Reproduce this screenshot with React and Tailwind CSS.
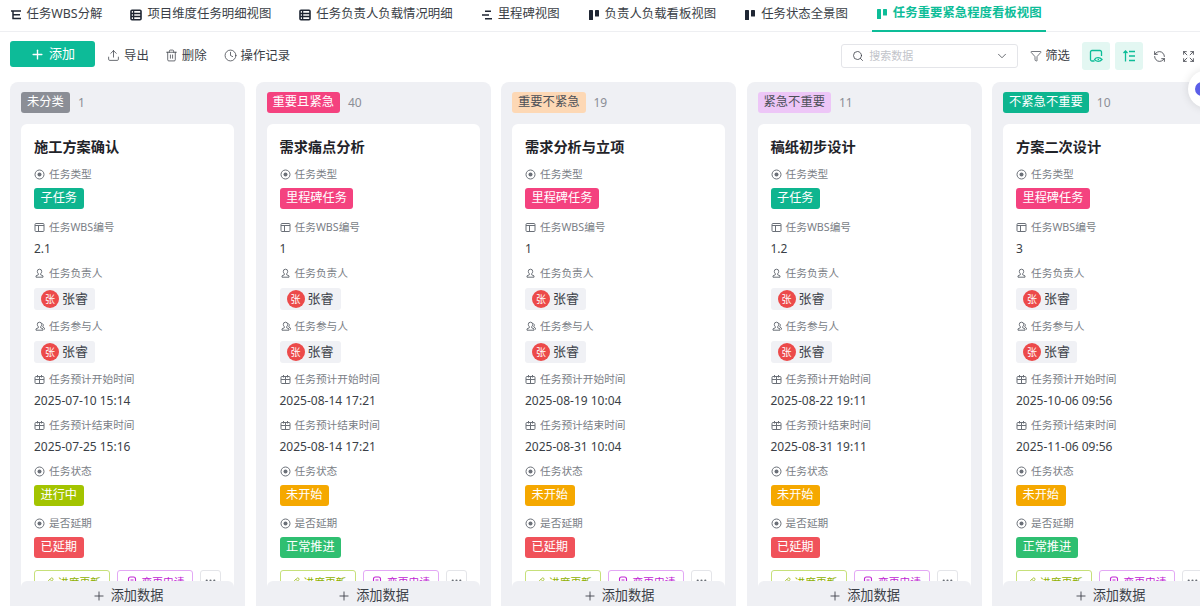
import { Plus, Upload, Trash2, Clock, Search, ChevronDown, Funnel, RefreshCcw, Expand, Pencil, Ellipsis } from 'lucide-react';

const tabs = [
  { name: '任务WBS分解', icon: 'tree' },
  { name: '项目维度任务明细视图', icon: 'table' },
  { name: '任务负责人负载情况明细', icon: 'table' },
  { name: '里程碑视图', icon: 'gantt' },
  { name: '负责人负载看板视图', icon: 'kanban' },
  { name: '任务状态全景图', icon: 'kanban' },
  { name: '任务重要紧急程度看板视图', icon: 'kanban', active: true },
];

const columns = [
  {
    name: '未分类', count: 1, tag: 'bg-[#8b8e96] text-white', title: '施工方案确认',
    type: '子任务', wbs: '2.1', start: '2025-07-10 15:14', end: '2025-07-25 15:16', status: '进行中', delay: '已延期',
  },
  {
    name: '重要且紧急', count: 40, tag: 'bg-[#f4427f] text-white', title: '需求痛点分析',
    type: '里程碑任务', wbs: '1', start: '2025-08-14 17:21', end: '2025-08-14 17:21', status: '未开始', delay: '正常推进',
  },
  {
    name: '重要不紧急', count: 19, tag: 'bg-[#fdd8b5] text-[#4b4f57]', title: '需求分析与立项',
    type: '里程碑任务', wbs: '1', start: '2025-08-19 10:04', end: '2025-08-31 10:04', status: '未开始', delay: '已延期',
  },
  {
    name: '紧急不重要', count: 11, tag: 'bg-[#edc6f7] text-[#4b4f57]', title: '稿纸初步设计',
    type: '子任务', wbs: '1.2', start: '2025-08-22 19:11', end: '2025-08-31 19:11', status: '未开始', delay: '已延期',
  },
  {
    name: '不紧急不重要', count: 10, tag: 'bg-[#0eb58f] text-white', title: '方案二次设计',
    type: '里程碑任务', wbs: '3', start: '2025-10-06 09:56', end: '2025-11-06 09:56', status: '未开始', delay: '正常推进',
  },
];

const tagColors = {
  子任务: 'bg-[#0eb58f]',
  里程碑任务: 'bg-[#f4427f]',
  进行中: 'bg-[#a3c400]',
  未开始: 'bg-[#f5a800]',
  已延期: 'bg-[#f0525a]',
  正常推进: 'bg-[#2fbf71]',
};

function TabIcon({ type, active }) {
  const color = active ? '#0dbd98' : '#1f2633';
  if (type === 'table') {
    return (
      <svg width="12" height="12" viewBox="0 0 12 12" fill="none" stroke={color}>
        <rect x="1" y="1.2" width="10" height="9.6" rx="1" strokeWidth="1.6" />
        <path d="M1 4.5h10M1 7.5h10M3.6 2v8" strokeWidth="1.3" />
      </svg>
    );
  }
  if (type === 'gantt') {
    return (
      <svg width="12" height="12" viewBox="0 0 12 12" fill="none" stroke={color} strokeWidth="1.6">
        <path d="M4 2.2h6M1 6h7M4 9.8h7" />
      </svg>
    );
  }
  if (type === 'tree') {
    return (
      <svg width="12" height="12" viewBox="0 0 12 12" fill="none" stroke={color} strokeWidth="1.5">
        <path d="M1 2h10M3 2v7.5h8M3 5.8h7" />
      </svg>
    );
  }
  return (
    <svg width="12" height="12" viewBox="0 0 12 12" fill={color}>
      <rect x="1" y="1" width="4" height="10" rx="0.6" />
      <rect x="7" y="1" width="4" height="6.5" rx="0.6" />
    </svg>
  );
}

function DotIcon() {
  return (
    <svg width="11" height="11" viewBox="0 0 11 11" fill="none" stroke="#6b7078">
      <circle cx="5.5" cy="5.5" r="4.5" strokeWidth="1" />
      <circle cx="5.5" cy="5.5" r="2" fill="#6b7078" stroke="none" />
    </svg>
  );
}

function BookIcon() {
  return (
    <svg width="11" height="11" viewBox="0 0 11 11" fill="none" stroke="#6b7078" strokeWidth="1">
      <rect x="1" y="1.5" width="9" height="8" rx="1" />
      <path d="M1 3.5h9M4.5 3.5v6" />
    </svg>
  );
}

function UserIcon({ double }) {
  return (
    <svg width="11" height="11" viewBox="0 0 11 11" fill="none" stroke="#6b7078" strokeWidth="1">
      <path d="M5.5 1.2a2.2 2.2 0 0 1 2.2 2.3c0 1-.5 1.8-1.1 2.3v.9l2.4 1.2v1.3H2v-1.3l2.4-1.2v-.9c-.6-.5-1.1-1.3-1.1-2.3a2.2 2.2 0 0 1 2.2-2.3z" />
      {double && <path d="M8.5 2.5c1 .8 1 2.4.2 3.3l1.8 1.4v1.3" />}
    </svg>
  );
}

function CalendarIcon() {
  return (
    <svg width="11" height="11" viewBox="0 0 11 11" fill="none" stroke="#6b7078" strokeWidth="1">
      <rect x="1" y="2.5" width="9" height="7" rx="1" />
      <path d="M1 5.5h9M3.5 1v2.5M7.5 1v2.5M5.5 3v6" />
    </svg>
  );
}

function ChangeIcon() {
  return (
    <svg width="12" height="12" viewBox="0 0 12 12" fill="none" stroke="#c026d3" strokeWidth="1.1">
      <rect x="2.5" y="1" width="7" height="6.5" rx="2" />
      <path d="M1 8h10v3H1zM4.5 4h3" />
    </svg>
  );
}

function NoteEyeIcon() {
  return (
    <svg width="14" height="14" viewBox="0 0 14 14" fill="none" stroke="#0dbd98" strokeWidth="1.3">
      <path d="M5.5 12H3a1.5 1.5 0 0 1-1.5-1.5V3A1.5 1.5 0 0 1 3 1.5h8A1.5 1.5 0 0 1 12.500 3v4" />
      <path d="M5.500 10.500c1.500-2.400 5.500-2.400 7.500 0-2 2.400-6 2.400-7.500 0z" />
      <circle cx="9.300" cy="10.500" r="0.8" fill="#0dbd98" stroke="none" />
    </svg>
  );
}

function SortIcon() {
  return (
    <svg width="14" height="14" viewBox="0 0 14 14" fill="none" stroke="#0dbd98" strokeWidth="1.3">
      <path d="M3.500 12.500V2M1.500 4l2-2 2 2M7 2.500h6M7 7h6M7 11.500h6" />
    </svg>
  );
}

function Field({ icon, label, children, gap = 'mt-[5px]', after = 'mb-[9px]' }) {
  return (
    <div className={after}>
      <div className="flex h-[18px] items-center gap-[4px] text-[10.7px] text-[#7a7e86]">
        <span className="flex w-[11px] justify-center">{icon}</span>
        <span>{label}</span>
      </div>
      <div className={`flex ${gap}`}>{children}</div>
    </div>
  );
}

function TextValue({ children }) {
  return <div className="flex h-[28px] items-center pb-[2px] text-[12px] text-[#3b3f47]">{children}</div>;
}

function Tag({ text }) {
  return (
    <span className={`flex h-[21px] items-center rounded-[3px] px-[6.5px] text-[12.2px] text-white ${tagColors[text]}`}>
      {text}
    </span>
  );
}

function Person() {
  return (
    <span className="flex h-[22px] items-center gap-[3px] rounded-[3px] bg-[#f0f1f5] px-[7px] text-[13px] text-[#3b3f47]">
      <span className="flex h-[18px] w-[18px] items-center justify-center rounded-full bg-[#ec4a4a] text-[10px] text-white">张</span>
      张睿
    </span>
  );
}

function TaskCard({ col }) {
  const dot = <DotIcon />;
  return (
    <div className="h-[600px] rounded-t-[6px] bg-white px-[13px] pt-[12px]">
      <div className="mb-[7px] flex h-[22px] items-center text-[14.2px] font-semibold text-[#1f2329]">{col.title}</div>
      <Field icon={dot} label="任务类型"><Tag text={col.type} /></Field>
      <Field icon={<BookIcon />} label="任务WBS编号" gap="" after=""><TextValue>{col.wbs}</TextValue></Field>
      <Field icon={<UserIcon />} label="任务负责人" gap="mt-[6px]" after="mb-[7px]"><Person /></Field>
      <Field icon={<UserIcon double />} label="任务参与人" gap="mt-[6px]" after="mb-[7px]"><Person /></Field>
      <Field icon={<CalendarIcon />} label="任务预计开始时间" gap="" after=""><TextValue>{col.start}</TextValue></Field>
      <Field icon={<CalendarIcon />} label="任务预计结束时间" gap="" after=""><TextValue>{col.end}</TextValue></Field>
      <Field icon={dot} label="任务状态" after="mb-[8px]"><Tag text={col.status} /></Field>
      <Field icon={dot} label="是否延期" after="mb-[12px]"><Tag text={col.delay} /></Field>
      <div className="flex gap-[7px]">
        <span className="flex h-[24px] w-[76px] items-center justify-center gap-[4px] rounded-[3px] border border-[#c6e07a] text-[10.7px] text-[#8fb000]">
          <Pencil size={11} strokeWidth={1.5} />进度更新
        </span>
        <span className="flex h-[24px] w-[76px] items-center justify-center gap-[4px] rounded-[3px] border border-[#e3a8f5] text-[10.7px] text-[#c026d3]">
          <ChangeIcon />变更申请
        </span>
        <span className="flex h-[24px] w-[21px] items-start justify-center rounded-[3px] border border-[#e4e5e9] pt-[3px] text-[#6b7078]">
          <Ellipsis size={13} />
        </span>
      </div>
    </div>
  );
}

function Column({ col }) {
  return (
    <div className="relative h-[524px] w-[235px] shrink-0 overflow-hidden rounded-t-[8px] bg-[#eff0f4] px-[11px] pt-[10px]">
      <div className="mb-[11px] flex h-[21px] items-center gap-[8px]">
        <span className={`flex h-[21px] items-center rounded-[3px] px-[6px] text-[12.3px] ${col.tag}`}>{col.name}</span>
        <span className="text-[12px] text-[#8b8e96]">{col.count}</span>
      </div>
      <TaskCard col={col} />
      <div className="absolute bottom-0 left-[11px] right-[11px] flex h-[25px] items-center justify-center gap-[5px] rounded-t-[6px] bg-[#eff0f4] pt-[4px] text-[13.2px] text-[#3b3f47]">
        <Plus size={14} strokeWidth={1.5} />添加数据
      </div>
    </div>
  );
}

export default function App() {
  return (
    <div
      className="relative h-[606px] w-[1200px] overflow-hidden bg-white"
      style={{ fontFamily: '"Noto Sans", "Noto Sans CJK SC", sans-serif' }}
    >
      {/* Tabs */}
      <div className="flex h-[32px] gap-[20px] border-b border-[#eeeff2] pl-[5.5px]">
        {tabs.map((tab) => (
          <div
            key={tab.name}
            className={`flex h-[32px] items-center gap-[5px] px-[4px] pb-[3px] text-[12.4px] ${
              tab.active ? 'border-b-2 border-[#0dbd98] font-semibold text-[#0dbd98]' : 'text-[#3b3f47]'
            }`}
          >
            <TabIcon type={tab.icon} active={tab.active} />
            {tab.name}
          </div>
        ))}
      </div>

      {/* Toolbar */}
      <div className="flex h-[50px] items-center justify-between pb-[2px] pl-[10px] pr-[5px]">
        <div className="flex items-center text-[12.4px] text-[#3b3f47]">
          <button className="mb-[4px] mr-[12px] flex h-[26px] w-[85px] items-center justify-center gap-[4px] rounded-[3px] bg-[#0dbb98] text-[13px] text-white">
            <Plus size={15} strokeWidth={2.2} />添加
          </button>
          <span className="mr-[16px] flex items-center gap-[4px]"><Upload size={13} strokeWidth={1.4} />导出</span>
          <span className="mr-[17px] flex items-center gap-[4px]"><Trash2 size={13} strokeWidth={1.4} />删除</span>
          <span className="flex items-center gap-[4px]"><Clock size={13} strokeWidth={1.4} />操作记录</span>
        </div>
        <div className="flex items-center text-[12.4px] text-[#3b3f47]">
          <div className="mr-[12px] flex h-[24px] w-[177px] items-center rounded-[3px] border border-[#e4e5e9] pl-[10px] pr-[8px]">
            <Search size={12} strokeWidth={1.6} />
            <span className="ml-[5px] flex-1 text-[11px] text-[#c2c4ca]">搜索数据</span>
            <ChevronDown size={14} strokeWidth={1.3} />
          </div>
          <span className="mr-[12px] flex items-center gap-[3px]"><Funnel size={12} strokeWidth={1.4} />筛选</span>
          <span className="mr-[5px] flex h-[28px] w-[28px] items-center justify-center rounded-[3px] bg-[#e3f7f2]">
            <NoteEyeIcon />
          </span>
          <span className="mr-[10px] flex h-[28px] w-[28px] items-center justify-center rounded-[3px] bg-[#e3f7f2]">
            <SortIcon />
          </span>
          <span className="mr-[16px]"><RefreshCcw size={13} strokeWidth={1.5} /></span>
          <Expand size={13} strokeWidth={1.5} />
        </div>
      </div>

      {/* Board */}
      <div className="flex gap-[10.5px] pl-[10px]">
        {columns.map((col) => (
          <Column key={col.name} col={col} />
        ))}
      </div>

      {/* Floating helper */}
      <div className="absolute left-[1188px] top-[70px] flex h-[38px] w-[38px] items-center rounded-full bg-white pl-[7px] shadow-[0_0_10px_rgba(0,0,0,0.12)]">
        <span className="h-[14px] w-[14px] rounded-full bg-[#5b5fe8]" />
      </div>
    </div>
  );
}
